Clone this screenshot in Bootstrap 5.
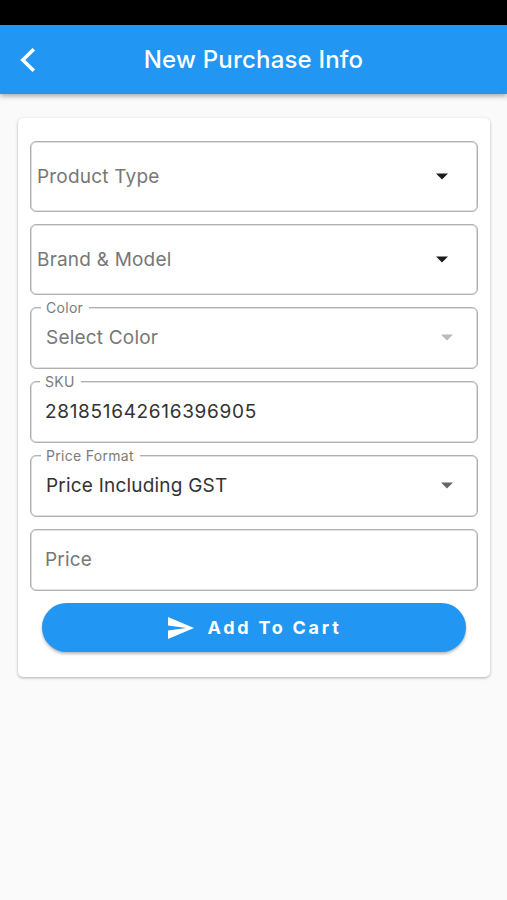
<!DOCTYPE html>
<html lang="en">
<head>
<meta charset="utf-8">
<meta name="viewport" content="width=device-width, initial-scale=1">
<title>New Purchase Info</title>
<link rel="stylesheet" href="https://cdn.jsdelivr.net/npm/bootstrap@5.3.0/dist/css/bootstrap.min.css">
<style>
body{background:#fafafa;font-family:Inter,"Liberation Sans",sans-serif;color:#333}
.status-strip{height:25px;background:#000}
.app-bar{height:69px;background:#2196f3;box-shadow:0 2px 5px rgba(0,0,0,.35);padding:0 20px}
.app-title{font-size:24px;font-weight:500;line-height:30px;letter-spacing:.2px}
.side-slot{width:16px;height:26px}
.form-card{margin:24px 17px 0 18px;padding:23px 12px 25px;border-radius:5px;box-shadow:0 1px 3px rgba(0,0,0,.3)}
.form-stack{gap:12px}
.field{height:62px;border:1px solid #b0b0b0;border-radius:6px;padding:0 24px 0 15px;font-size:19px;line-height:24px;letter-spacing:.2px;background:#fff;box-shadow:inset 0 0 0 .6px #c4c4c4}
.field-tall{height:71px;padding:1px 29px 0 6px}
.field-input{padding-left:14px}
.caret-icon{width:12px;height:7px;margin-bottom:2px}
.sku-value{letter-spacing:.68px}
.field-label{top:-9px;left:10px;padding:0 6px 0 5px;background:#fff;font-size:14px;line-height:18px;letter-spacing:.3px;color:#7b7b7b}
.field-input .field-label{left:9px}
.hint{color:#777}
.cart-btn{height:49px;margin:0 12px;background:#2196f3;font-size:18px;font-weight:700;letter-spacing:2.75px;box-shadow:0 2px 3px rgba(0,0,0,.28)}
.cart-btn:hover{background:#1e88e5}
.send-icon{margin-left:2px;margin-right:13px}
</style>
<script src="https://cdn.jsdelivr.net/npm/bootstrap@5.3.0/dist/js/bootstrap.bundle.min.js"></script>
</head>
<body class="min-vh-100">
<div class="status-strip"></div>
<header class="app-bar d-flex align-items-center justify-content-between text-white">
  <svg class="side-slot" viewBox="0 0 16 26" fill="none" stroke="#fff" stroke-width="3.6"><path d="M13.800 2.200 2.800 13l11 10.800"/></svg>
  <h1 class="app-title m-0">New Purchase Info</h1>
  <span class="side-slot"></span>
</header>
<main class="form-card bg-white">
  <div class="form-stack d-grid">
    <div class="field field-tall d-flex align-items-center justify-content-between hint"><span>Product Type</span>
      <svg class="caret-icon" viewBox="0 0 12 7"><path fill="#1c1c1c" d="M0 .4h12L6 6.600z"/></svg></div>
    <div class="field field-tall d-flex align-items-center justify-content-between hint"><span>Brand &amp; Model</span>
      <svg class="caret-icon" viewBox="0 0 12 7"><path fill="#1c1c1c" d="M0 .4h12L6 6.600z"/></svg></div>
    <div class="field position-relative d-flex align-items-center justify-content-between hint">
      <span class="field-label position-absolute">Color</span><span>Select Color</span>
      <svg class="caret-icon" viewBox="0 0 12 7"><path fill="#bbb" d="M0 .4h12L6 6.600z"/></svg></div>
    <div class="field field-input position-relative d-flex align-items-center">
      <span class="field-label position-absolute">SKU</span><span class="sku-value">281851642616396905</span></div>
    <div class="field position-relative d-flex align-items-center justify-content-between">
      <span class="field-label position-absolute">Price Format</span><span>Price Including GST</span>
      <svg class="caret-icon" viewBox="0 0 12 7"><path fill="#666" d="M0 .4h12L6 6.600z"/></svg></div>
    <div class="field field-input d-flex align-items-center hint"><span>Price</span></div>
    <button type="button" class="cart-btn btn rounded-pill border-0 text-white p-0 d-flex align-items-center justify-content-center">
      <svg class="send-icon" width="26" height="22" viewBox="0 0 26 22"><path fill="#fff" d="M0 22 26 11 0 0v8.600L18.500 11 0 13.400z"/></svg>Add To Cart</button>
  </div>
</main>
</body>
</html>
